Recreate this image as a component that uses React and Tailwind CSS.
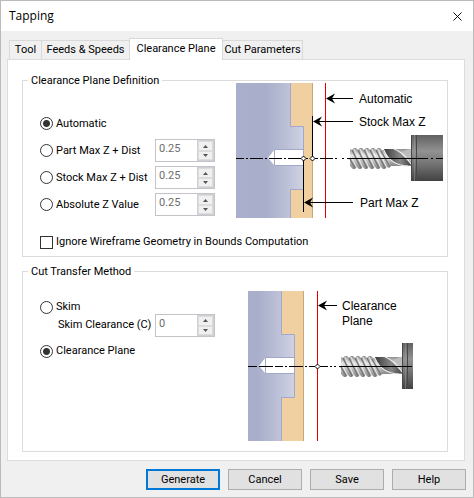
import { X } from "lucide-react";

const tabs = [
  { name: "Tool", active: false, cls: "w-[33px]" },
  { name: "Feeds & Speeds", active: false, cls: "w-[89px]" },
  { name: "Clearance Plane", active: true, cls: "w-[94px]" },
  { name: "Cut Parameters", active: false, cls: "w-[81px]" },
];

function Radio({ id, name, checked, children }) {
  return (
    <label htmlFor={id} className="flex w-[115px] shrink-0 items-center gap-[3px] whitespace-nowrap">
      <input
        id={id}
        type="radio"
        name={name}
        defaultChecked={checked}
        className="size-[13px] shrink-0 appearance-none rounded-full border border-[#333] bg-white checked:bg-[radial-gradient(circle,#333_0_3px,#fff_4px)]"
      />
      {children}
    </label>
  );
}

function Spin({ id, label, value }) {
  return (
    <div className="flex h-[23px] w-[60px] shrink-0 border border-[#c3c3c8] bg-white">
      <input
        id={id}
        aria-label={label}
        disabled
        defaultValue={value}
        className="w-[41px] bg-white pb-[3px] pl-[3px] text-[11px] text-[#6d6d6d]"
      />
      <div className="flex w-[17px] flex-col justify-between bg-[#cfcfd6] p-px">
        <button type="button" disabled aria-label="Increase" className="flex h-[10px] items-center justify-center border border-[#dcdcdc] bg-[#f0f0f0]">
          <svg width="5" height="3" viewBox="0 0 5 3"><path d="M0 3L2.5 0L5 3Z" fill="#555" /></svg>
        </button>
        <button type="button" disabled aria-label="Decrease" className="flex h-[9px] items-center justify-center border border-[#dcdcdc] bg-[#f0f0f0]">
          <svg width="5" height="3" viewBox="0 0 5 3"><path d="M0 0L2.5 3L5 0Z" fill="#555" /></svg>
        </button>
      </div>
    </div>
  );
}

function Arrow({ x, y, end }) {
  return (
    <g>
      <path d={`M${x + 3} ${y}H${end}`} stroke="#000" />
      <path d={`M${x} ${y}L${x + 9} ${y - 5}L${x + 6} ${y}L${x + 9} ${y + 5}Z`} fill="#000" />
    </g>
  );
}

function Workpiece({ id }) {
  return (
    <g>
      <defs>
        <linearGradient id={id} gradientUnits="userSpaceOnUse" x1="236" x2="304" y1="0" y2="0">
          <stop offset="0" stopColor="#aab0cc" />
          <stop offset="0.45" stopColor="#a9aeca" />
          <stop offset="0.8" stopColor="#bfc4da" />
          <stop offset="1" stopColor="#d0d3e4" />
        </linearGradient>
      </defs>
      <rect x="290" y="83" width="23" height="150" fill="#f0d0a0" />
      <path d="M312.5 83V233" stroke="#c8a878" />
      <path d="M230 80H290.500V126.500H303.500V189.500H290.500V240H230Z" fill={`url(#${id})`} stroke="#a3a8c8" />
      <path d="M303 149.500H274.500L268 158L274.500 165.500H303Z" fill="#fff" />
      <path d="M303.500 149.500H274.500V165.500H303.500" fill="none" stroke="#a3a8c8" />
    </g>
  );
}

function TapTool({ id }) {
  return (
    <g>
      <defs>
        <linearGradient id={`${id}-steel`} x1="0" x2="0" y1="0" y2="1">
          <stop offset="0" stopColor="#8e8e8e" />
          <stop offset="0.35" stopColor="#e4e4e4" />
          <stop offset="0.6" stopColor="#c4c4c4" />
          <stop offset="1" stopColor="#858585" />
        </linearGradient>
        <linearGradient id={`${id}-holder`} x1="0" x2="0" y1="0" y2="1">
          <stop offset="0" stopColor="#606060" />
          <stop offset="0.35" stopColor="#929292" />
          <stop offset="0.6" stopColor="#777" />
          <stop offset="1" stopColor="#424242" />
        </linearGradient>
        <linearGradient id={`${id}-flute`} x1="0" x2="1" y1="0" y2="0">
          <stop offset="0" stopColor="#3c3c3c" />
          <stop offset="0.6" stopColor="#888" />
          <stop offset="1" stopColor="#444" />
        </linearGradient>
      </defs>
      <rect x="384" y="149" width="27" height="17" fill={`url(#${id}-steel)`} />
      <path
        d="M350 149L352 150L354 148L356 148L358 150L360 148L362 148L364 150L366 148L368 148L370 150L372 148L374 148L376 150L378 148L380 148L382 150H386L391 166L389 168L387 167L385 169H383L381 167L379 169H377L375 167L373 169H371L369 167L367 169H365L363 167L361 169H359L357 167L355 169H353L350 166Z"
        fill={`url(#${id}-steel)`}
      />
      <path
        d="M350 159L355 168M352 150L361 168M358 150L367 168M364 150L373 168M370 150L379 168M376 150L385 168M381 151L390 167"
        stroke="#777"
        strokeWidth="1.500"
      />
      <path
        d="M350 155L357 168M354 149L363 168M360 149L369 168M366 149L375 168M372 149L381 168M378 149L387 168"
        stroke="#f0f0f0"
      />
      <path d="M384 149H393C401 152 406 159 411 165C400 166 388 161 384 149Z" fill={`url(#${id}-flute)`} />
      <path d="M384 150C388 161 398 166 408 166" fill="none" stroke="#efefef" />
      <path d="M394 149C402 152 407 158 411 164" fill="none" stroke="#eee" />
      <path d="M411 149C407 149 404 151 403 153L411 162Z" fill="#bdbdbd" />
      <rect x="411" y="135" width="32" height="46" fill={`url(#${id}-holder)`} />
      <path d="M411.500 135V181M416.500 135V181" stroke="#484848" />
      <path d="M414.500 135V181" stroke="#999" strokeOpacity="0.5" />
    </g>
  );
}

function Diamond({ x }) {
  return <path d={`M${x} 156L${x + 2.5} 158.500L${x} 161L${x - 2.5} 158.500Z`} fill="#fff" stroke="#000" />;
}

function DefinitionPicture() {
  return (
    <svg width="207" height="135" viewBox="236 83 207 135" className="shrink-0" role="img" aria-label="Clearance plane positions">
      <Workpiece id="body-def" />
      <path d="M325.500 83V218" stroke="#e80000" />
      <TapTool id="tool-def" />
      <path
        d="M236 158.500H244M246 158.500H248M250 158.500H263M265 158.500H267M269 158.500H282M284 158.500H286M288 158.500H301M306 158.500H308M314 158.500H318M320 158.500H333M335 158.500H337M342 158.500H344M347 158.500H428M431 158.500H433M436 158.500H443"
        stroke="#000"
      />
      <path d="M312.500 116V158M303.500 159V212" stroke="#000" />
      <Diamond x={303.5} />
      <Diamond x={312.5} />
      <Arrow x={326} y={98.5} end={353} />
      <Arrow x={313} y={121.5} end={353} />
      <Arrow x={304} y={202.5} end={353} />
      <g fill="#000" className="font-['Liberation_Sans',Arial,sans-serif] text-[12px]">
        <text x="359" y="103">Automatic</text>
        <text x="359" y="126">Stock Max Z</text>
        <text x="360" y="207">Part Max Z</text>
      </g>
    </svg>
  );
}

function TransferPicture() {
  return (
    <svg width="165" height="150" viewBox="257 83 165 150" className="shrink-0" role="img" aria-label="Transfer at the clearance plane">
      <Workpiece id="body-cut" />
      <path d="M326.500 83V233" stroke="#e80000" />
      <TapTool id="tool-cut" />
      <path
        d="M257 158.500H266M268 158.500H282M284 158.500H292M294 158.500H296M298 158.500H312M314 158.500H316M318 158.500H324M329 158.500H337M339 158.500H341M343 158.500H345M348 158.500H421"
        stroke="#000"
      />
      <Diamond x={326.5} />
      <Arrow x={327} y={97.5} end={346} />
      <g fill="#000" className="font-['Liberation_Sans',Arial,sans-serif] text-[12px]">
        <text x="351" y="102">Clearance</text>
        <text x="351" y="117">Plane</text>
      </g>
    </svg>
  );
}

const options = [
  { id: "auto", label: "Automatic", checked: true },
  { id: "part", label: "Part Max Z + Dist", value: "0.25" },
  { id: "stock", label: "Stock Max Z + Dist", value: "0.25" },
  { id: "abs", label: "Absolute Z Value", value: "0.25" },
];

export default function App() {
  return (
    <div className="border border-[#bbb] bg-[#f0f0f0] font-[Roboto,sans-serif] text-[11px] leading-4 text-black">
      <header className="flex h-[30px] items-center justify-between bg-white px-[8px] font-['Open_Sans','Noto_Sans',sans-serif] text-[12px]">
        <h1>Tapping</h1>
        <button type="button" aria-label="Close">
          <X size={15} strokeWidth={1.5} />
        </button>
      </header>

      <main className="pt-[7px] pr-[8px] pl-[6px]">
        <div role="tablist" className="flex items-end pl-[2px]">
          {tabs.map((t) => (
            <button
              key={t.name}
              type="button"
              role="tab"
              aria-selected={t.active}
              className={`${t.cls} -mr-px whitespace-nowrap border border-b-0 border-[#d9d9d9] ${
                t.active ? "z-10 -mb-px h-[22px] bg-white pb-[2px]" : "h-[19px] bg-[#f0f0f0]"
              }`}
            >
              {t.name}
            </button>
          ))}
        </div>

        <div role="tabpanel" className="border border-[#dcdcdc] bg-white pr-[16px] pb-[8px] pl-[14px] pt-[12px]">
          <fieldset className="border border-[#dcdcdc]">
            <legend className="ml-[5px] h-[17px] px-[3px] leading-[17px]">Clearance Plane Definition</legend>
            <div className="-mt-[6px] pb-[4px] pl-[17px]">
              <div className="flex">
                <div className="w-[196px] shrink-0 pt-[27px]">
                  {options.map((o) => (
                    <div key={o.id} className="flex h-[27px] items-center">
                      <Radio id={o.id} name="definition" checked={o.checked}>
                        {o.label}
                      </Radio>
                      {o.value && <Spin id={`${o.id}-distance`} label={o.label} value={o.value} />}
                    </div>
                  ))}
                </div>
                <DefinitionPicture />
              </div>
              <label htmlFor="ignore" className="mt-[14px] flex h-[20px] items-center gap-[3px]">
                <input id="ignore" type="checkbox" className="size-[13px] appearance-none border border-[#333] bg-white checked:bg-[#333]" />
                Ignore Wireframe Geometry in Bounds Computation
              </label>
            </div>
          </fieldset>

          <fieldset className="mt-[6px] border border-[#dcdcdc]">
            <legend className="ml-[5px] h-[17px] px-[3px] leading-[17px]">Cut Transfer Method</legend>
            <div className="flex pt-[11px] pb-[10px] pl-[17px]">
              <div className="w-[208px] shrink-0 pt-[7px]">
                <div className="flex h-[18px] items-center">
                  <Radio id="skim" name="transfer">Skim</Radio>
                </div>
                <div className="flex h-[18px] items-center">
                  <label htmlFor="skim-clearance" className="w-[115px] shrink-0 whitespace-nowrap pl-[18px]">Skim Clearance (C)</label>
                  <Spin id="skim-clearance" value="0" />
                </div>
                <div className="mt-[8px] flex h-[18px] items-center">
                  <Radio id="plane" name="transfer" checked>Clearance Plane</Radio>
                </div>
              </div>
              <TransferPicture />
            </div>
          </fieldset>
        </div>
      </main>

      <footer className="flex justify-end gap-[8px] px-[7px] pt-[8px] pb-[7px]">
        <button type="button" className="h-[21px] w-[74px] border-2 border-[#0078d7] bg-[#e1e1e1] leading-none">Generate</button>
        <button type="button" className="h-[21px] w-[74px] border border-[#adadad] bg-[#e1e1e1] leading-none">Cancel</button>
        <button type="button" className="h-[21px] w-[74px] border border-[#adadad] bg-[#e1e1e1] leading-none">Save</button>
        <button type="button" className="h-[21px] w-[74px] border border-[#adadad] bg-[#e1e1e1] leading-none">Help</button>
      </footer>
    </div>
  );
}
